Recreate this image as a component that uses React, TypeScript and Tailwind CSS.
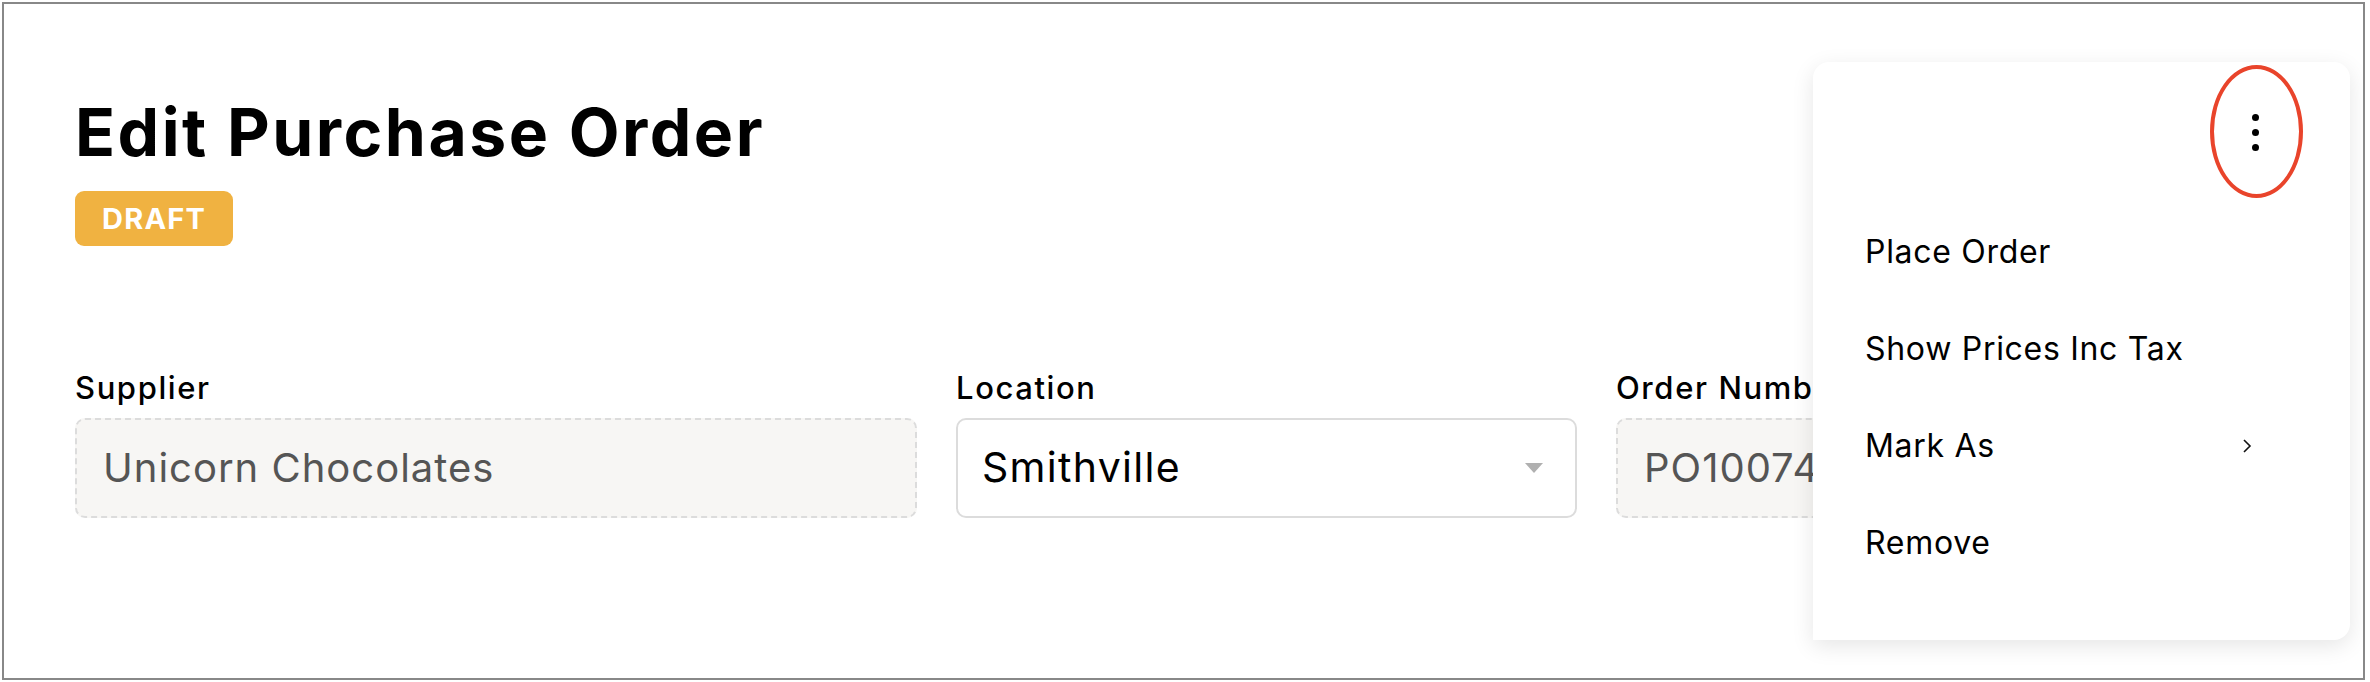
import React from 'react'

const font = { fontFamily: 'Inter, "Noto Sans", sans-serif' }

const menuItems = ['Place Order', 'Show Prices Inc Tax', 'Mark As', 'Remove']

const Field: React.FC<{
  label: string
  value: string
  width: string
  disabled?: boolean
  select?: boolean
}> = ({ label, value, width, disabled, select }) => (
  <div className={`flex flex-col ${width}`}>
    <div className="text-[31px] leading-[36px] font-medium tracking-[1.6px] text-black whitespace-nowrap">{label}</div>
    <div
      className={
        disabled
          ? 'mt-[12px] h-[100px] rounded-[10px] border-2 border-dashed border-[#dcdcdc] bg-[#f7f6f4] flex items-center px-[26px]'
          : 'mt-[12px] h-[100px] rounded-[10px] border-2 border-[#dcdcdc] bg-white flex items-center pl-[24px] pr-[32px]'
      }
    >
      <span
        className={
          disabled
            ? 'text-[40px] tracking-[1px] text-[#555] whitespace-nowrap'
            : 'text-[41px] tracking-[1.3px] text-black whitespace-nowrap'
        }
      >
        {value}
      </span>
      {select && (
        <svg className="ml-auto" width="18" height="10" viewBox="0 0 18 10">
          <path d="M0 0h18L9 10z" fill="#b0b0b0" />
        </svg>
      )}
    </div>
  </div>
)

export default function App() {
  return (
    <div className="w-[2370px] h-[682px] bg-white p-[2px]" style={font}>
      <div className="relative h-[678px] w-[2363px] border-2 border-[#888888] pl-[71px] pt-[95px] overflow-hidden">
        {/* header */}
        <h1 className="text-[66px] leading-[66px] font-bold text-black tracking-[2.5px]">Edit Purchase Order</h1>
        <div className="mt-[26px] inline-flex h-[55px] items-center rounded-[9px] bg-[#f0b241] px-[27px]">
          <span className="text-[29px] font-bold tracking-[1.2px] text-white leading-none">DRAFT</span>
        </div>

        {/* fields */}
        <div className="mt-[124px] flex gap-[39px]">
          <Field label="Supplier" value="Unicorn Chocolates" width="w-[842px]" disabled />
          <Field label="Location" value="Smithville" width="w-[621px]" select />
          <Field label="Order Number" value="PO100748" width="w-[621px]" disabled />
        </div>

        {/* actions menu */}
        <div className="absolute left-[1809px] top-[58px] w-[537px] h-[578px] bg-white rounded-[16px] rounded-bl-none shadow-[0_6px_22px_rgba(0,0,0,0.1)] flex flex-col">
          <div className="relative h-[141px]">
            <div className="absolute left-[397px] top-[3px] w-[93px] h-[133px] rounded-[50%] border-[4px] border-[#e9442b]" />
            <div className="absolute left-[439px] top-[52px] flex flex-col gap-[8px]">
              <span className="block w-[7px] h-[7px] rounded-full bg-black" />
              <span className="block w-[7px] h-[7px] rounded-full bg-black" />
              <span className="block w-[7px] h-[7px] rounded-full bg-black" />
            </div>
          </div>
          <ul className="flex flex-col pl-[52px] pr-[98px]">
            {menuItems.map((item) => (
              <li key={item} className="h-[97px] flex items-center text-[32px] tracking-[0.7px] text-black">
                <span>{item}</span>
                {item === 'Mark As' && (
                  <svg className="ml-auto" width="10" height="16" viewBox="0 0 10 16">
                    <path d="M2 2l6 6-6 6" fill="none" stroke="#111" strokeWidth="1.6" />
                  </svg>
                )}
              </li>
            ))}
          </ul>
        </div>
      </div>
    </div>
  )
}
